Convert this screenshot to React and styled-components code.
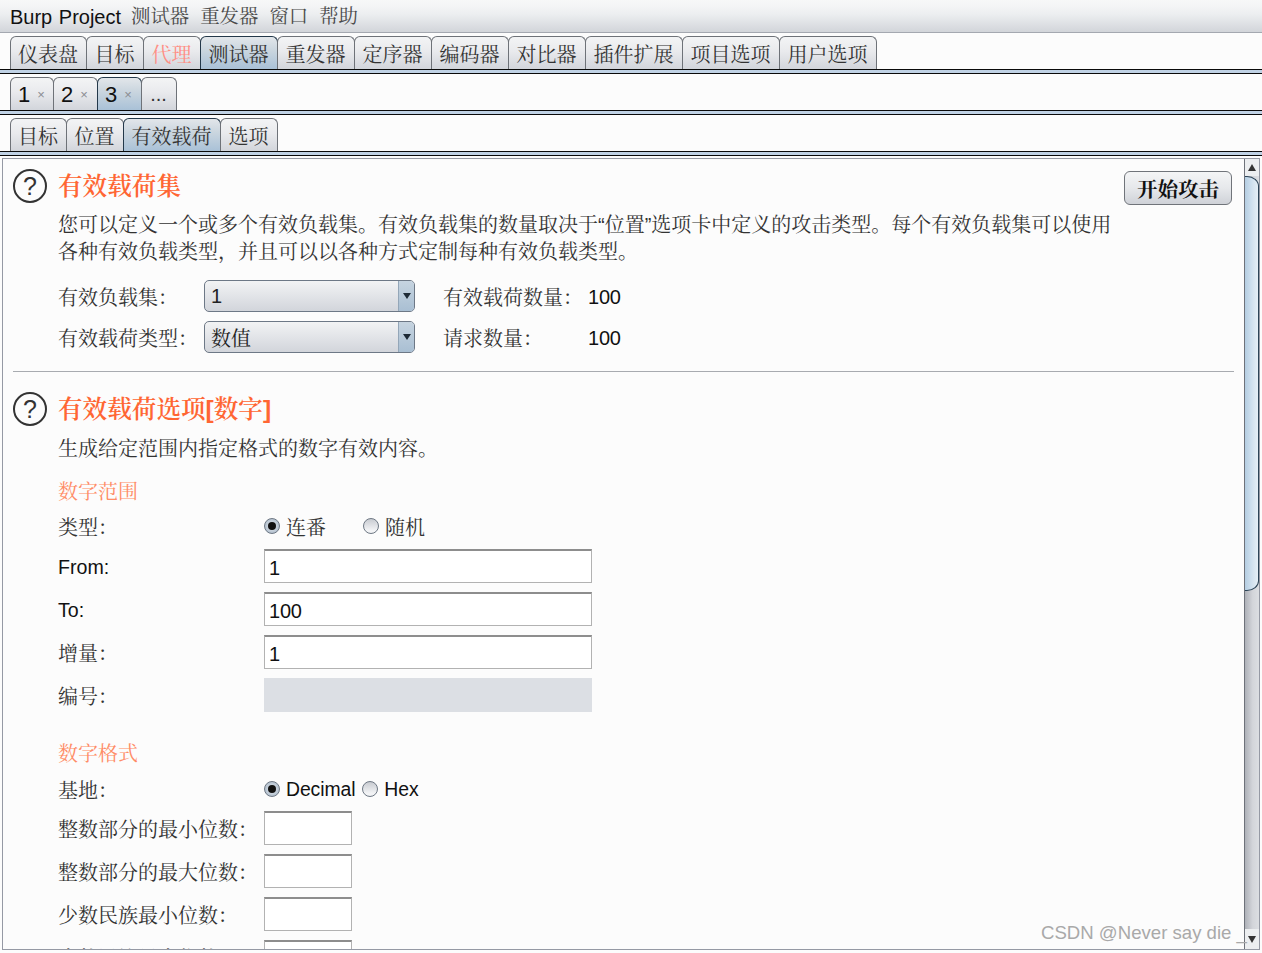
import React from 'react';
import styled, { createGlobalStyle } from 'styled-components';

const Global = createGlobalStyle`
  html, body { margin: 0; padding: 0; background: #fcfcfc; }
  body {
    font-family: "Liberation Sans", "Noto Serif CJK SC", "Noto Sans CJK SC", sans-serif;
    font-size: 20px; color: #111; overflow: hidden;
  }
  * { box-sizing: border-box; }
`;

const Page = styled.div`
  width: 1262px; height: 953px; position: relative; overflow: hidden;
  background: #fcfcfc; display: flex; flex-direction: column;
`;
const MenuBar = styled.div`
  height: 33px; flex: none; display: flex; align-items: center; padding: 1px 0 0 10px; gap: 11px;
  border-bottom: 1px solid #a4a8b0;
  background: linear-gradient(#f7f8f8 0%, #f4f5f6 18%, #eceef0 45%, #d2d5da 100%);
`;
const MenuBrand = styled.span`
  font-size: 20px; color: #111; word-spacing: 1px; line-height: 1; margin-right: -1px;
`;
const MenuItem = styled.span`
  font-size: 19.4px; color: #4a4a4a; line-height: 1;
`;
const Strip = styled.div`
  height: 36px; padding: 3px 0 0 10px; display: flex; align-items: flex-end; flex: none;
`;
const Band = styled.div`
  height: 5px; flex: none; background: #c0d2e5;
  border-top: 1px solid #0a0a0a; border-bottom: 1px solid #0a0a0a;
`;
const Tab = styled.div`
  width: ${p => p.$w}px; height: 33px; flex: none;
  display: flex; align-items: center; justify-content: ${p => p.$left ? 'flex-start' : 'center'};
  padding: 1px ${p => p.$left ? 0 : 1}px 0 ${p => p.$left ? 7 : 0}px;
  font-size: 20px; color: ${p => p.$alert ? '#ff8f85' : '#333'};
  border: 1px solid ${p => p.$on ? '#23384a' : '#6e7278'};
  border-bottom: none;
  margin-right: -1px;
  border-radius: 6px 6px 0 0;
  background: ${p => p.$on
    ? 'linear-gradient(#e2e6ea 0%, #cbd6df 40%, #a9c1d7 100%)'
    : 'linear-gradient(#f3f4f5 0%, #e9eaed 45%, #d2d5db 100%)'};
`;
const Close = styled.span`
  font-size: 13px; color: #8a8d92; margin-left: 7px; line-height: 1;
`;
const Num = styled.span`
  font-size: 22px; color: #111;
`;
const Body = styled.div`
  flex: 1; min-height: 0; display: flex; margin: 2px 2px 3px 2px;
  border: 1px solid #9599a4; overflow: hidden; background: #fcfcfc;
`;
const Content = styled.div`
  flex: 1; min-width: 0; overflow: hidden; padding: 10px 10px 0 10px;
  display: flex; flex-direction: column;
`;
const SectionHead = styled.div`
  display: flex; align-items: flex-start; gap: 11px; flex: none; height: ${p => p.$h || 34}px;
  margin-top: ${p => p.$top || 0}px;
`;
const HelpIcon = styled.div`
  width: 34px; height: 34px; flex: none; border-radius: 50%;
  border: 2px solid #333; color: #333;
  display: flex; align-items: center; justify-content: center;
  font-size: 25px; line-height: 1;
`;
const Title = styled.h2`
  margin: 0; flex: 1; font-size: 24.6px; font-weight: 600; color: #ff6633; line-height: 36px;
`;
const AttackButton = styled.button`
  width: 108px; height: 34px; margin: 2px 2px 0 0; flex: none; padding: 0;
  font: inherit; font-size: 20.5px; font-weight: 700; color: #111;
  border: 1px solid #70747a; border-radius: 6px;
  background: linear-gradient(#f4f5f6 0%, #e6e8eb 50%, #cfd2d8 100%);
`;
const Desc = styled.p`
  margin: ${p => p.$top}px 0 0 45px; font-size: 20px; line-height: 27px; color: #333; flex: none;
`;
const FieldRow = styled.div`
  display: flex; align-items: center; flex: none; margin: ${p => p.$top}px 0 0 45px;
  height: ${p => p.$h}px;
`;
const Label = styled.div`
  width: ${p => p.$w || 206}px; flex: none; font-size: 20px; color: #333; white-space: nowrap;
  padding-top: 1px;
`;
const LatinLabel = styled(Label)`
  font-size: 19.6px; color: #111; padding-top: 3px;
`;
const Value = styled.div`
  font-size: 20px; color: #111; padding-top: 2px; letter-spacing: -0.2px;
`;
const SelectBox = styled.div`
  width: 211px; height: 32px; flex: none; margin-right: 28px;
  border: 1px solid #6d7886; border-radius: 5px; overflow: hidden;
  display: flex; align-items: center;
  background: linear-gradient(#f2f3f4 0%, #e2e4e8 50%, #d2d5db 100%);
`;
const SelectText = styled.div`
  flex: 1; padding-left: 6px; font-size: 20px; color: #222;
`;
const SelectArrow = styled.div`
  width: 16px; height: 100%; flex: none; border-left: 1px solid #93a6b8;
  display: flex; align-items: center; justify-content: center;
  background: linear-gradient(#c6d4e0 0%, #a9bfd3 100%);
  &::after {
    content: ""; border-style: solid; border-width: 6px 4px 0 4px;
    border-color: #1d2a36 transparent transparent transparent;
  }
`;
const Divider = styled.div`
  height: 1px; flex: none; background: #a8abb0; margin-top: 18px;
`;
const SubTitle = styled.div`
  margin: ${p => p.$top}px 0 0 45px; height: 27px; line-height: 27px; flex: none;
  font-size: 20px; color: #ff8c66;
`;
const RadioDot = styled.span`
  width: 16px; height: 16px; border-radius: 50%; flex: none;
  border: 1px solid #6e7884; display: flex; align-items: center; justify-content: center;
  background: ${p => p.$on
    ? 'radial-gradient(circle, #e8ecf0 0%, #9fb0c2 100%)'
    : 'linear-gradient(#c8cbd1 0%, #f2f3f5 80%)'};
  &::after {
    content: ""; width: 8px; height: 8px; border-radius: 50%;
    background: ${p => p.$on ? '#111' : 'transparent'};
  }
`;
const RadioLabel = styled.span`
  font-size: 20px; color: #333; margin-left: 6px;
  margin-right: ${p => p.$gap}px;
`;
const LatinRadioLabel = styled(RadioLabel)`
  color: #111; font-size: 19.4px; letter-spacing: -0.1px;
`;
const TextBox = styled.input`
  width: ${p => p.$w}px; height: 34px; flex: none; padding: 3px 4px 0; margin: 0;
  font: inherit; font-size: 20px; color: #111; outline: none; letter-spacing: -0.2px;
  border: 1px solid #b2b2b2; border-top: 2px solid #8d8d8d;
  background: ${p => p.disabled ? '#dcdfe4' : '#fff'};
  ${p => p.disabled && 'border: none;'}
`;
const Scrollbar = styled.div`
  width: 15px; flex: none; display: flex; flex-direction: column;
  border-left: 1px solid #6e727a;
  background: linear-gradient(90deg, #aeb1b8 0%, #d3d5da 55%, #dcdee2 100%);
`;
const ScrollButton = styled.div`
  height: ${p => p.$h}px; flex: none; background: #eceef0;
  display: flex; align-items: center; justify-content: center;
  &::after {
    content: ""; border-style: solid;
    border-width: ${p => p.$up ? '0 4px 7px 4px' : '7px 4px 0 4px'};
    border-color: ${p => p.$up
      ? 'transparent transparent #333 transparent'
      : '#333 transparent transparent transparent'};
  }
`;
const Thumb = styled.div`
  height: 415px; flex: none; border: 1px solid #2d4558; border-left: none;
  border-radius: 0 12px 12px 0 / 0 10px 10px 0;
  background: linear-gradient(90deg, #b4cde2 0%, #cfe0ee 50%, #e6eff6 100%);
`;
const Track = styled.div`
  flex: 1;
`;
const Watermark = styled.div`
  position: absolute; left: 1041px; top: 921px; font-size: 18.6px; line-height: 24px;
  color: #a9a9a9; white-space: nowrap;
`;

const Strip1 = [['仪表盘',77],['目标',58],['代理',58,'alert'],['测试器',78,'on'],['重发器',78],['定序器',78],['编码器',78],['对比器',78],['插件扩展',98],['项目选项',98],['用户选项',98]];
const Strip3 = [['目标',57],['位置',58],['有效载荷',98,'on'],['选项',58]];

const Help = () => <HelpIcon>?</HelpIcon>;

export default function App() {
  return (
    <Page>
      <Global />
      <MenuBar>
        <MenuBrand>Burp Project</MenuBrand>
        <MenuItem>测试器</MenuItem>
        <MenuItem>重发器</MenuItem>
        <MenuItem>窗口</MenuItem>
        <MenuItem>帮助</MenuItem>
      </MenuBar>
      <Strip>
        {Strip1.map(([t, w, f]) => <Tab key={t} $w={w} $on={f === 'on'} $alert={f === 'alert'}>{t}</Tab>)}
      </Strip>
      <Band />
      <Strip>
        <Tab $w={44} $left><Num>1</Num><Close>×</Close></Tab>
        <Tab $w={45} $left><Num>2</Num><Close>×</Close></Tab>
        <Tab $w={45} $left $on><Num>3</Num><Close>×</Close></Tab>
        <Tab $w={36}>...</Tab>
      </Strip>
      <Band />
      <Strip>
        {Strip3.map(([t, w, f]) => <Tab key={t} $w={w} $on={f === 'on'}>{t}</Tab>)}
      </Strip>
      <Band />
      <Body>
        <Content>
          <SectionHead $h={36}>
            <Help />
            <Title>有效载荷集</Title>
            <AttackButton>开始攻击</AttackButton>
          </SectionHead>
          <Desc $top={7}>
            您可以定义一个或多个有效负载集。有效负载集的数量取决于“位置”选项卡中定义的攻击类型。每个有效负载集可以使用<br />
            各种有效负载类型，并且可以以各种方式定制每种有效负载类型。
          </Desc>
          <FieldRow $top={14} $h={32}>
            <Label $w={146}>有效负载集：</Label>
            <SelectBox><SelectText>1</SelectText><SelectArrow /></SelectBox>
            <Label $w={145}>有效载荷数量：</Label>
            <Value>100</Value>
          </FieldRow>
          <FieldRow $top={9} $h={32}>
            <Label $w={146}>有效载荷类型：</Label>
            <SelectBox><SelectText>数值</SelectText><SelectArrow /></SelectBox>
            <Label $w={145}>请求数量：</Label>
            <Value>100</Value>
          </FieldRow>
          <Divider />
          <SectionHead $top={20}>
            <Help />
            <Title>有效载荷选项[数字]</Title>
          </SectionHead>
          <Desc $top={10}>生成给定范围内指定格式的数字有效内容。</Desc>
          <SubTitle $top={16}>数字范围</SubTitle>
          <FieldRow $top={4} $h={32}>
            <Label>类型：</Label>
            <RadioDot $on /><RadioLabel $gap={37}>连番</RadioLabel>
            <RadioDot /><RadioLabel $gap={0}>随机</RadioLabel>
          </FieldRow>
          <FieldRow $top={7} $h={34}><LatinLabel>From:</LatinLabel><TextBox $w={328} readOnly value="1" /></FieldRow>
          <FieldRow $top={9} $h={34}><LatinLabel>To:</LatinLabel><TextBox $w={328} readOnly value="100" /></FieldRow>
          <FieldRow $top={9} $h={34}><Label>增量：</Label><TextBox $w={328} readOnly value="1" /></FieldRow>
          <FieldRow $top={9} $h={34}><Label>编号：</Label><TextBox $w={328} disabled /></FieldRow>
          <SubTitle $top={29}>数字格式</SubTitle>
          <FieldRow $top={5} $h={32}>
            <Label>基地：</Label>
            <RadioDot $on /><LatinRadioLabel $gap={7}>Decimal</LatinRadioLabel>
            <RadioDot /><LatinRadioLabel $gap={0}>Hex</LatinRadioLabel>
          </FieldRow>
          <FieldRow $top={6} $h={34}><Label>整数部分的最小位数：</Label><TextBox $w={88} readOnly /></FieldRow>
          <FieldRow $top={9} $h={34}><Label>整数部分的最大位数：</Label><TextBox $w={88} readOnly /></FieldRow>
          <FieldRow $top={9} $h={34}><Label>少数民族最小位数：</Label><TextBox $w={88} readOnly /></FieldRow>
          <FieldRow $top={9} $h={34}><Label>少数民族最大位数：</Label><TextBox $w={88} readOnly /></FieldRow>
        </Content>
        <Scrollbar>
          <ScrollButton $h={17} $up />
          <Thumb />
          <Track />
          <ScrollButton $h={20} />
        </Scrollbar>
      </Body>
      <Watermark>CSDN @Never say die _</Watermark>
    </Page>
  );
}
